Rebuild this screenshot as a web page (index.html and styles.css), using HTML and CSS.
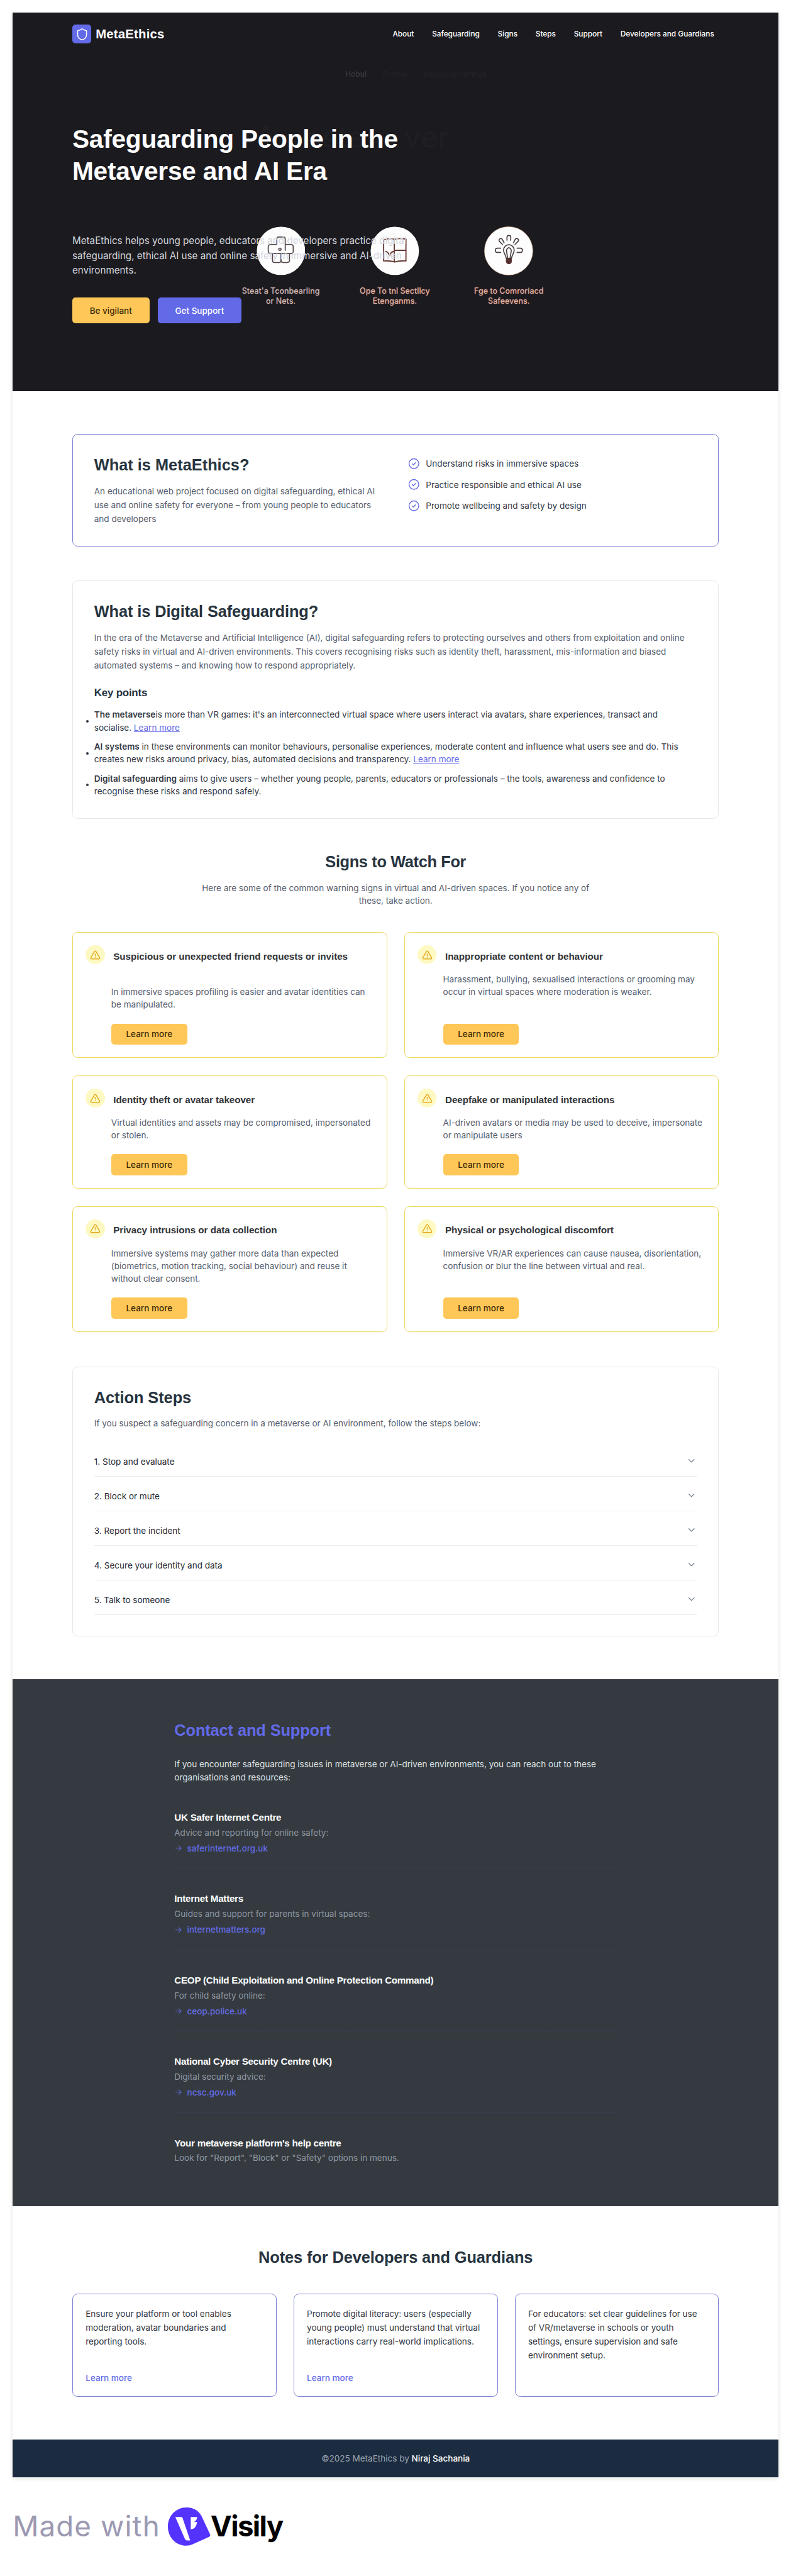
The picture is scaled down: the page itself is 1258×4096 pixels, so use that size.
FILE: index.html
```html
<!DOCTYPE html>
<html lang="en">
<head>
<meta charset="utf-8">
<title>MetaEthics</title>
<link rel="stylesheet" href="styles.css">
</head>
<body>
<svg width="0" height="0" class="defs" aria-hidden="true">
  <symbol id="check" viewBox="0 0 24 24"><circle cx="12" cy="12" r="10"/><path d="M8.8 12.3l2.2 2.2 4.3-4.6"/></symbol>
  <symbol id="warn" viewBox="0 0 24 24"><path d="M10.3 4.2 2.2 18a2 2 0 0 0 1.7 3h16.2a2 2 0 0 0 1.7-3L13.7 4.2a2 2 0 0 0-3.4 0z"/><path d="M12 9.5v4.5M12 17.3v.2"/></symbol>
  <symbol id="chevron" viewBox="0 0 16 16"><path d="M3 5.5l5 5 5-5"/></symbol>
  <symbol id="arrow" viewBox="0 0 16 16"><path d="M2.8 8h10.4M8.6 3.4 13.2 8l-4.6 4.6"/></symbol>
</svg>
<div class="page">
  <header class="hero">
    <div class="ghosts" aria-hidden="true">
      <span class="ghost-nav g1">Hobul</span>
      <span class="ghost-nav g2">Rootiei</span>
      <span class="ghost-nav g3">Naveouordethngs</span>
      <span class="ghost-title t1">A</span>
      <span class="ghost-title t2">aste</span>
      <span class="ghost-title t3">ver</span>
    </div>
    <div class="art">
      <figure>
        <svg viewBox="0 0 92 92"><circle cx="46" cy="46" r="45.5" fill="#fefdfd"/><g fill="none" stroke="#51464a" stroke-width="2" stroke-linejoin="round"><path d="M38 34V24q0-4 4-4h8q4 0 4 4v10h11q4 0 4 4v8q0 5-4 5H27q-5 0-5-5v-8q0-4 5-4h11zM30 51v13q0 4 4 4h8q4 0 4-4v-2q0 6 4 6h7q5 0 5-4V51M46 51v12M54 34v11"/><circle cx="44" cy="43" r="2.2"/></g></svg>
        <figcaption class="cap-a">Steat'a Tconbearling<br>or Nets.</figcaption>
      </figure>
      <figure>
        <svg viewBox="0 0 92 92"><circle cx="46" cy="46" r="45.5" fill="#fefdfd"/><g fill="none" stroke="#643733" stroke-width="2.2" stroke-linejoin="round"><path d="M25 25q12-3 20-1 10-2 22 0v41q-12-1-21 2-9-3-21-2zM45 24v42M45 45h22M29 47q5 2 7 8 3-8 9-8"/></g></svg>
        <figcaption>Ope To tnl Sectllcy<br>Etenganms.</figcaption>
      </figure>
      <figure>
        <svg viewBox="0 0 92 92"><circle cx="46" cy="46" r="45.5" fill="#fefdfd" stroke="#e6b795" stroke-width=".7"/><g fill="none" stroke="#4b4044" stroke-width="2"><path d="M41.500 60C41 54 36.500 51 36.500 44.500a10 10 0 0 1 20 0c0 6.500-4.500 9.500-5 15.500zM44 58l-2-12q0-4 4.500-6 4.500 2 4.500 6l-2 12"/><path d="M43 26v-6q0-3 3.500-3t3.500 3v6M34.500 34l-6-6q-1.500-4 2-5 2-1 4 2l3 6M58 34l6-6q2-4-2-5-2-1-4 2l-3 6M31 41h-6q-4 0-4 4t4 4h6M62 41h6q4 0 4 4t-4 4h-6"/></g><path d="M41 60h11v7q-2 4-5.500 4T41 67z" fill="#56312f"/></svg>
        <figcaption>Fge to Comroriacd<br>Safeevens.</figcaption>
      </figure>
    </div>
    <div class="bar">
      <a class="brand"><span class="logo"><svg viewBox="0 0 24 24"><path d="M20 13c0 5-3.500 7.500-7.660 8.950a1 1 0 0 1-.67-.010C7.500 20.500 4 18 4 13V6a1 1 0 0 1 1-1c2 0 4.500-1.200 6.240-2.720a1.170 1.170 0 0 1 1.520 0C14.510 3.810 17 5 19 5a1 1 0 0 1 1 1z"/></svg></span>MetaEthics</a>
      <nav><a>About</a><a>Safeguarding</a><a>Signs</a><a>Steps</a><a>Support</a><a>Developers and Guardians</a></nav>
    </div>
    <h1>Safeguarding People in the<br>Metaverse and AI Era</h1>
    <p class="lead">MetaEthics helps young people, educators and developers practice digital<br>safeguarding, ethical AI use and online safety in immersive and AI-driven<br>environments.</p>
    <div class="actions"><a class="btn yellow">Be vigilant</a><a class="btn violet">Get Support</a></div>
  </header>

  <main>
    <section class="card about">
      <div>
        <h2>What is MetaEthics?</h2>
        <p>An educational web project focused on digital safeguarding, ethical AI<br>use and online safety for everyone – from young people to educators<br>and developers</p>
      </div>
      <ul class="checks">
        <li><svg><use href="#check"/></svg>Understand risks in immersive spaces</li>
        <li><svg><use href="#check"/></svg>Practice responsible and ethical AI use</li>
        <li><svg><use href="#check"/></svg>Promote wellbeing and safety by design</li>
      </ul>
    </section>

    <section class="card digital">
      <h2>What is Digital Safeguarding?</h2>
      <p>In the era of the Metaverse and Artificial Intelligence (AI), digital safeguarding refers to protecting ourselves and others from exploitation and online<br>safety risks in virtual and AI-driven environments. This covers recognising risks such as identity theft, harassment, mis-information and biased<br>automated systems – and knowing how to respond appropriately.</p>
      <h3>Key points</h3>
      <ul class="points">
        <li><b>The metaverse</b>is more than VR games: it's an interconnected virtual space where users interact via avatars, share experiences, transact and<br>socialise. <a>Learn more</a></li>
        <li><b>AI systems</b> in these environments can monitor behaviours, personalise experiences, moderate content and influence what users see and do. This<br>creates new risks around privacy, bias, automated decisions and transparency. <a>Learn more</a></li>
        <li><b>Digital safeguarding</b> aims to give users – whether young people, parents, educators or professionals – the tools, awareness and confidence to<br>recognise these risks and respond safely.</li>
      </ul>
    </section>

    <section class="signs">
      <h2>Signs to Watch For</h2>
      <p>Here are some of the common warning signs in virtual and AI-driven spaces. If you notice any of<br>these, take action.</p>
      <div class="grid">
        <article class="sign"><span class="badge"><svg><use href="#warn"/></svg></span><h4>Suspicious or unexpected friend requests or invites</h4><p><br>In immersive spaces profiling is easier and avatar identities can<br>be manipulated.</p><a class="btn yellow">Learn more</a></article>
        <article class="sign"><span class="badge"><svg><use href="#warn"/></svg></span><h4>Inappropriate content or behaviour</h4><p>Harassment, bullying, sexualised interactions or grooming may<br>occur in virtual spaces where moderation is weaker.</p><a class="btn yellow">Learn more</a></article>
        <article class="sign"><span class="badge"><svg><use href="#warn"/></svg></span><h4>Identity theft or avatar takeover</h4><p>Virtual identities and assets may be compromised, impersonated<br>or stolen.</p><a class="btn yellow">Learn more</a></article>
        <article class="sign"><span class="badge"><svg><use href="#warn"/></svg></span><h4>Deepfake or manipulated interactions</h4><p>AI-driven avatars or media may be used to deceive, impersonate<br>or manipulate users</p><a class="btn yellow">Learn more</a></article>
        <article class="sign"><span class="badge"><svg><use href="#warn"/></svg></span><h4>Privacy intrusions or data collection</h4><p>Immersive systems may gather more data than expected<br>(biometrics, motion tracking, social behaviour) and reuse it<br>without clear consent.</p><a class="btn yellow">Learn more</a></article>
        <article class="sign"><span class="badge"><svg><use href="#warn"/></svg></span><h4>Physical or psychological discomfort</h4><p>Immersive VR/AR experiences can cause nausea, disorientation,<br>confusion or blur the line between virtual and real.</p><a class="btn yellow">Learn more</a></article>
      </div>
    </section>

    <section class="card steps">
      <h2>Action Steps</h2>
      <p>If you suspect a safeguarding concern in a metaverse or AI environment, follow the steps below:</p>
      <ul>
        <li>1. Stop and evaluate<svg><use href="#chevron"/></svg></li>
        <li>2. Block or mute<svg><use href="#chevron"/></svg></li>
        <li>3. Report the incident<svg><use href="#chevron"/></svg></li>
        <li>4. Secure your identity and data<svg><use href="#chevron"/></svg></li>
        <li>5. Talk to someone<svg><use href="#chevron"/></svg></li>
      </ul>
    </section>
  </main>

  <section class="contact">
    <h2>Contact and Support</h2>
    <p class="intro">If you encounter safeguarding issues in metaverse or AI-driven environments, you can reach out to these<br>organisations and resources:</p>
    <div class="org"><h4>UK Safer Internet Centre</h4><p>Advice and reporting for online safety:</p><a><svg><use href="#arrow"/></svg>saferinternet.org.uk</a></div>
    <div class="org"><h4>Internet Matters</h4><p>Guides and support for parents in virtual spaces:</p><a><svg><use href="#arrow"/></svg>internetmatters.org</a></div>
    <div class="org"><h4>CEOP (Child Exploitation and Online Protection Command)</h4><p>For child safety online:</p><a><svg><use href="#arrow"/></svg>ceop.police.uk</a></div>
    <div class="org"><h4>National Cyber Security Centre (UK)</h4><p>Digital security advice:</p><a><svg><use href="#arrow"/></svg>ncsc.gov.uk</a></div>
    <div class="org"><h4>Your metaverse platform's help centre</h4><p>Look for "Report", "Block" or "Safety" options in menus.</p></div>
  </section>

  <section class="notes">
    <h2>Notes for Developers and Guardians</h2>
    <div class="trio">
      <article><p>Ensure your platform or tool enables<br>moderation, avatar boundaries and<br>reporting tools.</p><a>Learn more</a></article>
      <article><p>Promote digital literacy: users (especially<br>young people) must understand that virtual<br>interactions carry real-world implications.</p><a>Learn more</a></article>
      <article><p>For educators: set clear guidelines for use<br>of VR/metaverse in schools or youth<br>settings, ensure supervision and safe<br>environment setup.</p></article>
    </div>
  </section>

  <footer>©2025 MetaEthics by <b>Niraj Sachania</b></footer>
</div>
<div class="made">
  <span class="made-text">Made with</span>
  <svg viewBox="0 0 80 72"><path d="M35 0C15 0 0 16 0 36s15 36 35 36q6 0 11-2.500L77 55.500q3.500-1.500 2.500-4.500L66 22C61 8 50 0 35 0z" fill="#5533ff"/><path d="M14 18h13l15 44h-6q-3 0-4.500-4z" fill="#fff"/><path d="M43 18h12q0 6-6 9.500h6Q53 41 43 41z" fill="#fff"/></svg>
  <span class="visily">Visily</span>
</div>
</body>
</html>
```
FILE: styles.css
```css
/* 1rem equals 10 design pixels */
html { font-size: 8.4543px; }
* { box-sizing: border-box; margin: 0; padding: 0; }
body {
  background: #fff;
  padding: 2.4rem 2.4rem 0;
  height: 4096px;
  overflow: hidden;
  font: 1.6rem/2.4rem Inter, "Liberation Sans", sans-serif;
  color: #323743;
  white-space: nowrap;
}
.defs { position: absolute; }
ul { list-style: none; }
svg { display: block; fill: none; stroke-linecap: round; stroke-linejoin: round; }
h1, h2, h3, h4, .brand { font-family: "Liberation Sans", Arial, sans-serif; font-weight: 700; }
h2 { font-size: 3rem; line-height: 3.6rem; letter-spacing: -.004em; color: #27343f; }
h4 { font-size: 1.8rem; line-height: 2.8rem; letter-spacing: -.018em; }

.page { width: 144.05rem; box-shadow: 0 .2rem .7rem rgba(23, 26, 31, .14); }

.hero {
  position: relative;
  height: 71.2rem;
  padding: 2.2rem 11.2rem 0;
  background: #1b1a1f;
  color: #fff;
}
.bar, h1, .lead, .actions { position: relative; }
.bar { display: flex; justify-content: space-between; align-items: center; height: 3.6rem; padding-right: .9rem; }
.brand { display: flex; align-items: center; gap: .8rem; font-size: 2.4rem; letter-spacing: .012em; }
.logo { display: grid; place-items: center; width: 3.6rem; height: 3.6rem; border-radius: .6rem; background: #636ae8; }
.logo svg { width: 2.5rem; height: 2.5rem; stroke: #fff; stroke-width: 1.7; }
nav { display: flex; gap: 3.4rem; font-size: 1.4rem; font-weight: 500; }
h1 { margin-top: 15rem; font-size: 4.8rem; line-height: 6rem; letter-spacing: -.005em; }
.lead { margin-top: 8.7rem; font-size: 1.8rem; line-height: 2.8rem; color: #d3d6dd; }
.actions { display: flex; gap: 1.6rem; margin-top: 3.7rem; }
.btn { display: flex; align-items: center; justify-content: center; border-radius: .6rem; font-weight: 500; }
.yellow { background: #ffc758; color: #3d2a06; }
.violet { background: #636ae8; color: #fff; }
.actions .btn { height: 4.8rem; width: 14.5rem; }
.actions .violet { width: 15.7rem; }

.ghosts span { position: absolute; filter: blur(.08rem); }
.ghost-nav { top: 10.4rem; font-size: 1.4rem; font-weight: 500; color: #232227; }
.ghosts .g1 { left: 62.6rem; color: #3c3b40; }
.g2 { left: 69.6rem; }
.g3 { left: 77.2rem; }
.ghost-title { top: 20.4rem; font-size: 5.6rem; line-height: 6rem; font-weight: 500; color: #1f1e23; }
.t1 { left: 45.7rem; }
.t2 { left: 55rem; }
.t3 { left: 73.6rem; }
.art { position: absolute; left: 39.7rem; top: 40.2rem; display: flex; }
.art figure { width: 21.45rem; display: flex; flex-direction: column; align-items: center; }
.art svg { width: 9.2rem; height: 9.2rem; }
.art figcaption { margin-top: 2rem; text-align: center; font-size: 1.48rem; line-height: 1.95rem; font-weight: 500; color: #dbb1a6; text-shadow: 0 0 .2rem #7a3526; }
.art .cap-a { color: #cdb9b7; text-shadow: 0 0 .2rem #4a302e; }

main { padding: 8.05rem 11.2rem 0; }
.card { border: 1px solid #e6e8eb; border-radius: 1rem; padding: 3.9rem 4rem 0; }
.card p, .signs > p { color: #565d6d; }
.about { display: flex; height: 21.1rem; border-color: #7c82d3; }
.about > div { width: 59.1rem; }
.about h2 { letter-spacing: 0; }
.about p { margin-top: 1.9rem; line-height: 2.6rem; }
.checks { display: grid; gap: 1.6rem; align-content: start; margin-top: .3rem; }
.checks li { display: flex; align-items: center; gap: 1.2rem; }
.checks svg { width: 2.2rem; height: 2.2rem; margin-left: -.1rem; stroke: #636ae8; stroke-width: 1.8; }

.digital { height: 44.8rem; margin-top: 6.45rem; }
.digital p { margin-top: 2rem; line-height: 2.6rem; }
h3 { margin-top: 2.3rem; font-size: 2rem; line-height: 2.8rem; letter-spacing: -.012em; color: #27343f; }
.points { display: grid; gap: 1.2rem; margin-top: 1.5rem; }
.points li { position: relative; }
.points li::before { content: ""; position: absolute; left: -1.5rem; top: 2.2rem; width: .5rem; height: .5rem; border-radius: 50%; background: #323743; }
.points b { font-weight: 600; }
.points a { color: #636ae8; text-decoration: underline; }

.signs { padding-top: 6.3rem; text-align: center; }
.signs h2 { letter-spacing: -.014em; }
.signs > p { margin-top: 1.9rem; }
.grid {
  display: grid;
  grid-template: 23.7rem 21.3rem 23.7rem / 1fr 1fr;
  gap: 3.27rem 3.2rem;
  margin-top: 4.7rem;
  text-align: left;
}
.sign {
  display: grid;
  grid-template: 5.2rem 1fr 4rem / 4.8rem 1fr;
  padding: 2.35rem 2.4rem;
  border: 1px solid #ecd95c;
  border-radius: 1rem;
}
.badge { display: grid; place-items: center; width: 3.6rem; height: 3.6rem; border-radius: 50%; background: #fef9c3; }
.badge svg { width: 2rem; height: 2rem; stroke: #e5a91e; stroke-width: 2; }
.sign h4 { margin: .7rem 0 0 .4rem; letter-spacing: -.003em; color: #323438; }
.sign p, .sign .btn { grid-column: 2; }
.sign p { color: #565d6d; }
.sign .btn { width: 14.3rem; height: 4rem; }

.steps { height: 50.7rem; margin-top: 6.5rem; }
.steps h2 { letter-spacing: -.002em; }
.steps p { margin-top: 1.9rem; }
.steps ul { margin-top: 2.3rem; }
.steps li { display: flex; justify-content: space-between; height: 6.5rem; padding-top: 2.5rem; border-bottom: .2rem solid #ebecee; color: #1e2733; }
.steps li svg { width: 1.6rem; height: 1.6rem; margin: .25rem .3rem 0 0; stroke: #6e7787; stroke-width: 1.6; }

.contact { height: 99.2rem; margin-top: 8.05rem; padding: 7.86rem 30.4rem 0; background: #343a3f; }
.contact h2 { color: #636ae8; }
.intro { margin-top: 3.4rem; color: #dee1e6; }
.org { height: 15.3rem; }
.intro + .org { margin-top: 5rem; }
.org h4 { color: #fff; }
.org p { margin-top: .25rem; color: #9197a3; }
.org a { display: flex; align-items: center; gap: .8rem; margin-top: .55rem; color: #636ae8; font-weight: 500; }
.org a svg { width: 1.6rem; height: 1.6rem; stroke: #636ae8; stroke-width: 1.2; }
.org:not(:last-child) { background: linear-gradient(#373c4a, #373c4a) 0 10.9rem / 83.2rem .2rem no-repeat; }

.notes { height: 43.8rem; padding: 7.8rem 11.2rem 0; }
.notes h2 { text-align: center; }
.trio { display: grid; grid-template-columns: repeat(3, 1fr); gap: 3.2rem; margin-top: 5rem; }
.trio article { display: flex; flex-direction: column; justify-content: space-between; height: 19.35rem; padding: 2.5rem 2.4rem 2.2rem; border: 1px solid #7c82d3; border-radius: 1rem; line-height: 2.6rem; }
.trio a { color: #636ae8; font-weight: 500; line-height: 2.4rem; }
footer { height: 7.2rem; line-height: 7.3rem; text-align: center; background: #1b2b40; color: #9ea7b1; }
footer b { color: #fff; font-weight: 500; }

.made { display: flex; height: 7.2rem; margin-top: 5.6rem; }
.made svg { width: 8rem; height: 7.2rem; }
.made-text, .visily { font-size: 5.4rem; line-height: 7.2rem; }
.made-text { width: 29.2rem; color: #9c99b2; letter-spacing: .024em; }
.visily { font-weight: 700; color: #000; letter-spacing: -.036em; }
```
